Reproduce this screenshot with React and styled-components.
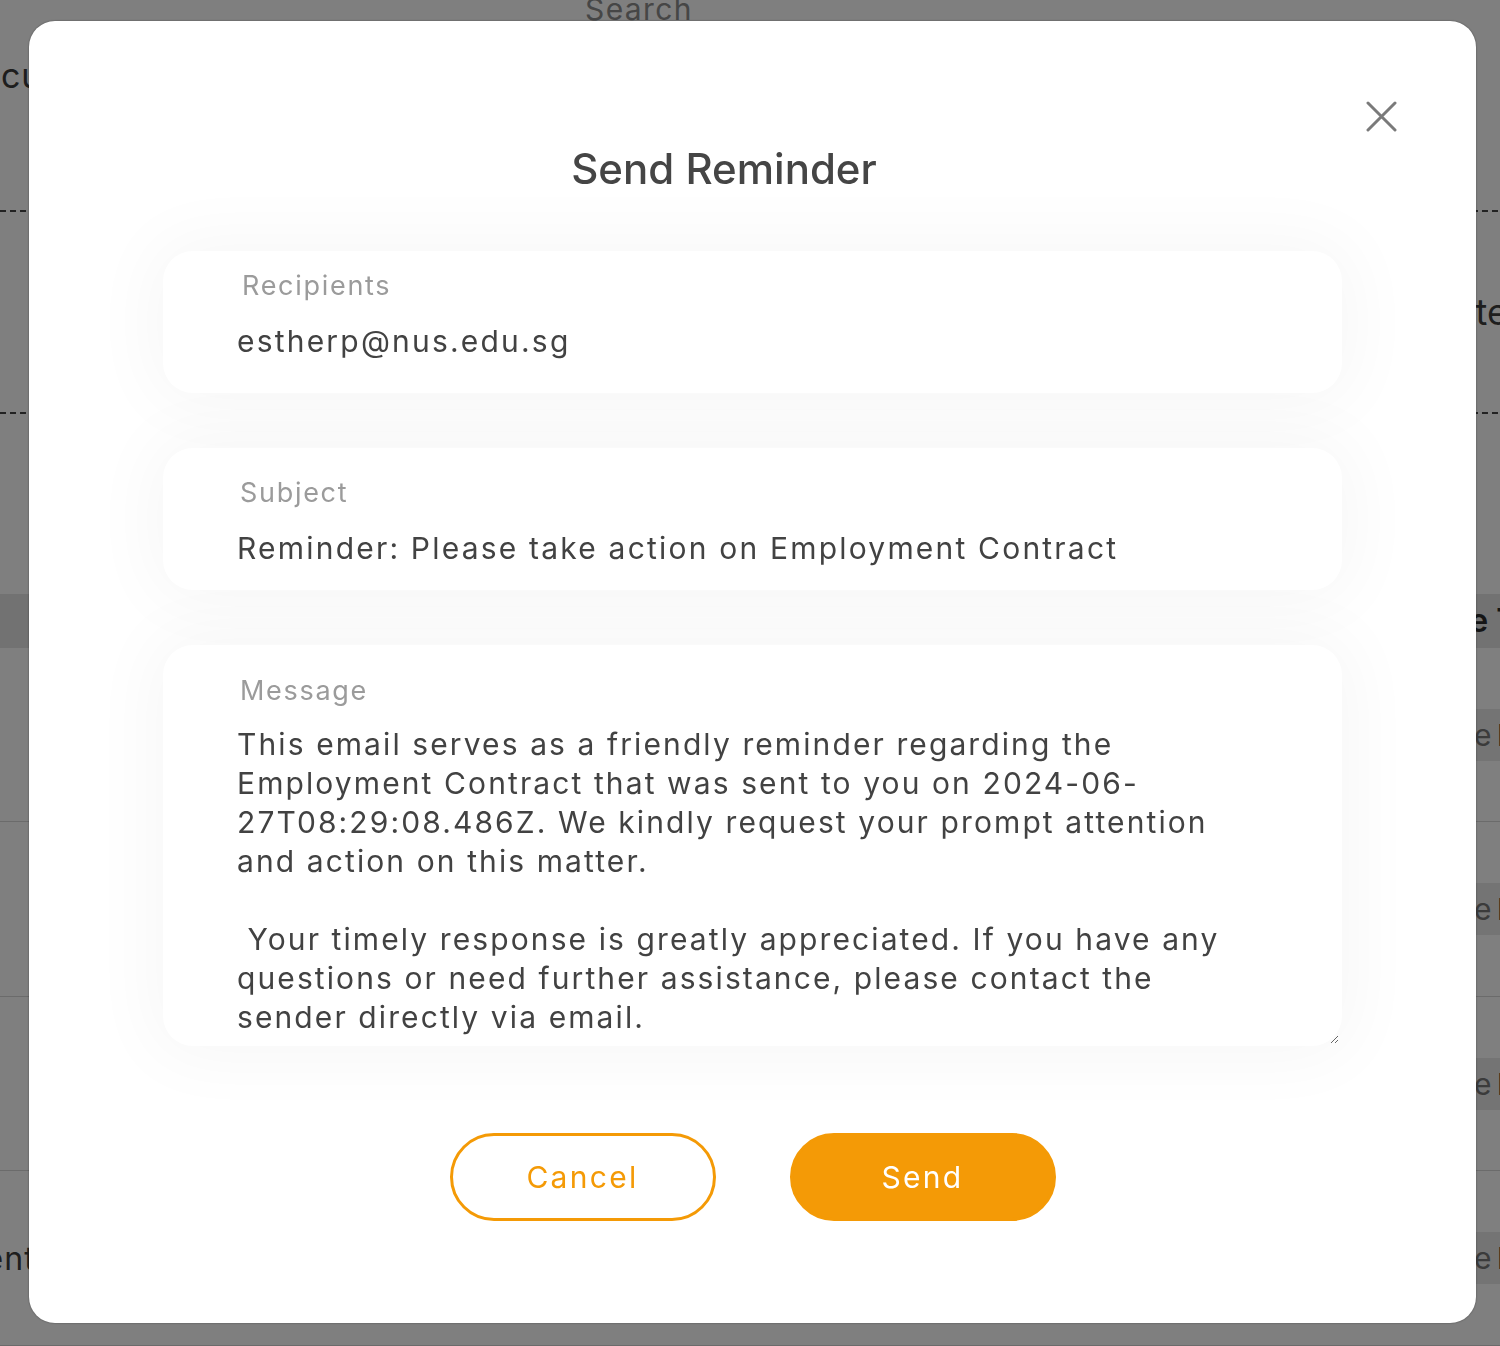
import React from "react";
import styled, { createGlobalStyle } from "styled-components";

const GlobalStyle = createGlobalStyle`
  html, body {
    margin: 0;
    padding: 0;
  }
  body {
    font-family: Inter, "Noto Sans", sans-serif;
    background: #fff;
  }
`;

const ORANGE = "#f49a06";

/* ---------- page behind the dialog ---------- */

const Page = styled.div`
  width: 1500px;
  height: 1346px;
  overflow: hidden;
  background: #fff;
  display: flex;
  flex-direction: column;
  color: #3c3c3c;
`;

const SearchText = styled.div`
  margin: -9px 0 0 585px;
  height: 40px;
  font-size: 30px;
  line-height: 36px;
  letter-spacing: 1.4px;
  color: #8c8c8c;
`;

const PageTitle = styled.div`
  margin-left: -46px;
  height: 180px;
  font-size: 34px;
  line-height: 90px;
  letter-spacing: 1px;
  color: #3c3c3c;
`;

const FilterBox = styled.div`
  height: 200px;
  border-top: 2px dashed #444;
  border-bottom: 2px dashed #444;
  display: flex;
  align-items: center;
  justify-content: flex-end;
  margin-right: -8px;
  font-size: 36px;
  color: #3c3c3c;
`;

const TableHead = styled.div`
  margin-top: 180px;
  height: 54px;
  background: #e4e4e4;
  display: flex;
  align-items: center;
  justify-content: flex-end;
  margin-right: -73px;
  font-size: 32px;
  font-weight: 600;
  color: #2a2a2a;
  white-space: pre;
`;

const Row = styled.div`
  height: 174px;
  border-bottom: 1px solid #d6d6d6;
  display: flex;
  align-items: center;
  justify-content: space-between;
`;

const RowName = styled.div`
  margin-left: -140px;
  font-size: 32px;
  letter-spacing: 1px;
  color: #3c3c3c;
`;

const Badge = styled.div`
  margin-right: -16px;
  height: 52px;
  padding: 0 10px;
  display: flex;
  align-items: center;
  gap: 6px;
  background: #e8e8e8;
  font-size: 30px;
  color: #777;
  b {
    color: #222;
    font-weight: 700;
  }
`;

/* ---------- dialog ---------- */

const Overlay = styled.div`
  position: fixed;
  inset: 0;
  padding: 0 0 2px 5px;
  background: rgba(0, 0, 0, 0.5);
  display: flex;
  align-items: center;
  justify-content: center;
`;

const Modal = styled.div`
  width: 1447px;
  height: 1302px;
  box-sizing: border-box;
  background: #fff;
  border-radius: 26px;
  box-shadow: 0 0 2px rgba(0, 0, 0, 0.45);
  display: flex;
  flex-direction: column;
  padding: 80px 134px 0;
`;

const Header = styled.div`
  display: flex;
  align-items: flex-start;
  gap: 26px;
  margin: 0 -55px;
`;

const Title = styled.h2`
  flex: 1;
  margin: 44px 0 0;
  text-align: center;
  font-size: 42px;
  line-height: 48px;
  font-weight: 500;
  color: #454545;
`;

const CloseButton = styled.button`
  width: 31px;
  height: 31px;
  padding: 0;
  border: 0;
  background: none;
  cursor: pointer;
  display: flex;
`;

const Fields = styled.div`
  display: flex;
  flex-direction: column;
  gap: 55px;
  margin-top: 58px;
`;

const Card = styled.div`
  background: #fff;
  border-radius: 30px;
  box-shadow: 0 0 70px 12px rgba(0, 0, 0, 0.035);
  display: flex;
  flex-direction: column;
  height: ${(p) => p.$height}px;
  box-sizing: border-box;
  padding-top: ${(p) => p.$top}px;
`;

const Label = styled.label`
  padding-left: ${(p) => p.$indent || 79}px;
  font-size: 27px;
  line-height: 32px;
  letter-spacing: 1.7px;
  color: #9b9b9b;
`;

const Value = styled.div`
  margin-top: 21px;
  padding-left: 74px;
  font-size: 30px;
  line-height: 36px;
  letter-spacing: 2.2px;
  color: #424242;
`;

const MessageBox = styled.textarea`
  flex: 1;
  margin: 18px 3px 2px 0;
  padding: 0 97px 0 74px;
  border: 0;
  outline: none;
  background: transparent;
  font-family: Inter, "Noto Sans", sans-serif;
  font-size: 30px;
  line-height: 39px;
  letter-spacing: 2.1px;
  color: #424242;
  overflow: auto;
  resize: both;
`;

const Actions = styled.div`
  display: flex;
  justify-content: center;
  gap: 74px;
  margin-top: 87px;
`;

const Button = styled.button`
  width: 266px;
  height: 88px;
  box-sizing: border-box;
  border-radius: 44px;
  border: 3px solid ${ORANGE};
  background: ${(p) => (p.$primary ? ORANGE : "#fff")};
  color: ${(p) => (p.$primary ? "#fff" : ORANGE)};
  font-family: Inter, "Noto Sans", sans-serif;
  font-size: 30px;
  letter-spacing: 2.3px;
  cursor: pointer;
`;

const message =
  "This email serves as a friendly reminder regarding the Employment Contract that was sent to you on 2024-06-27T08:29:08.486Z. We kindly request your prompt attention and action on this matter.\n\n Your timely response is greatly appreciated. If you have any questions or need further assistance, please contact the sender directly via email.";

function CloseIcon() {
  return (
    <svg width="31" height="31" viewBox="0 0 31 31" fill="none">
      <path
        d="M2 2L29 29M29 2L2 29"
        stroke="#7a7a7a"
        strokeWidth="3"
        strokeLinecap="round"
      />
    </svg>
  );
}

export default function App() {
  return (
    <>
      <GlobalStyle />
      <Page>
        <SearchText>Search</SearchText>
        <PageTitle>Documents</PageTitle>
        <FilterBox>Date</FilterBox>
        <TableHead>Date Type</TableHead>
        {["", "", "", "Agreement"].map((name, i) => (
          <Row key={i}>
            <RowName>{name}</RowName>
            <Badge>
              Active<b>I</b>
            </Badge>
          </Row>
        ))}
      </Page>

      <Overlay>
        <Modal>
          <Header>
            <Title>Send Reminder</Title>
            <CloseButton aria-label="Close">
              <CloseIcon />
            </CloseButton>
          </Header>

          <Fields>
            <Card $height={142} $top={19}>
              <Label>Recipients</Label>
              <Value>estherp@nus.edu.sg</Value>
            </Card>
            <Card $height={142} $top={29}>
              <Label $indent={77}>Subject</Label>
              <Value>Reminder: Please take action on Employment Contract</Value>
            </Card>
            <Card $height={401} $top={30}>
              <Label $indent={77}>Message</Label>
              <MessageBox defaultValue={message} />
            </Card>
          </Fields>

          <Actions>
            <Button>Cancel</Button>
            <Button $primary>Send</Button>
          </Actions>
        </Modal>
      </Overlay>
    </>
  );
}
